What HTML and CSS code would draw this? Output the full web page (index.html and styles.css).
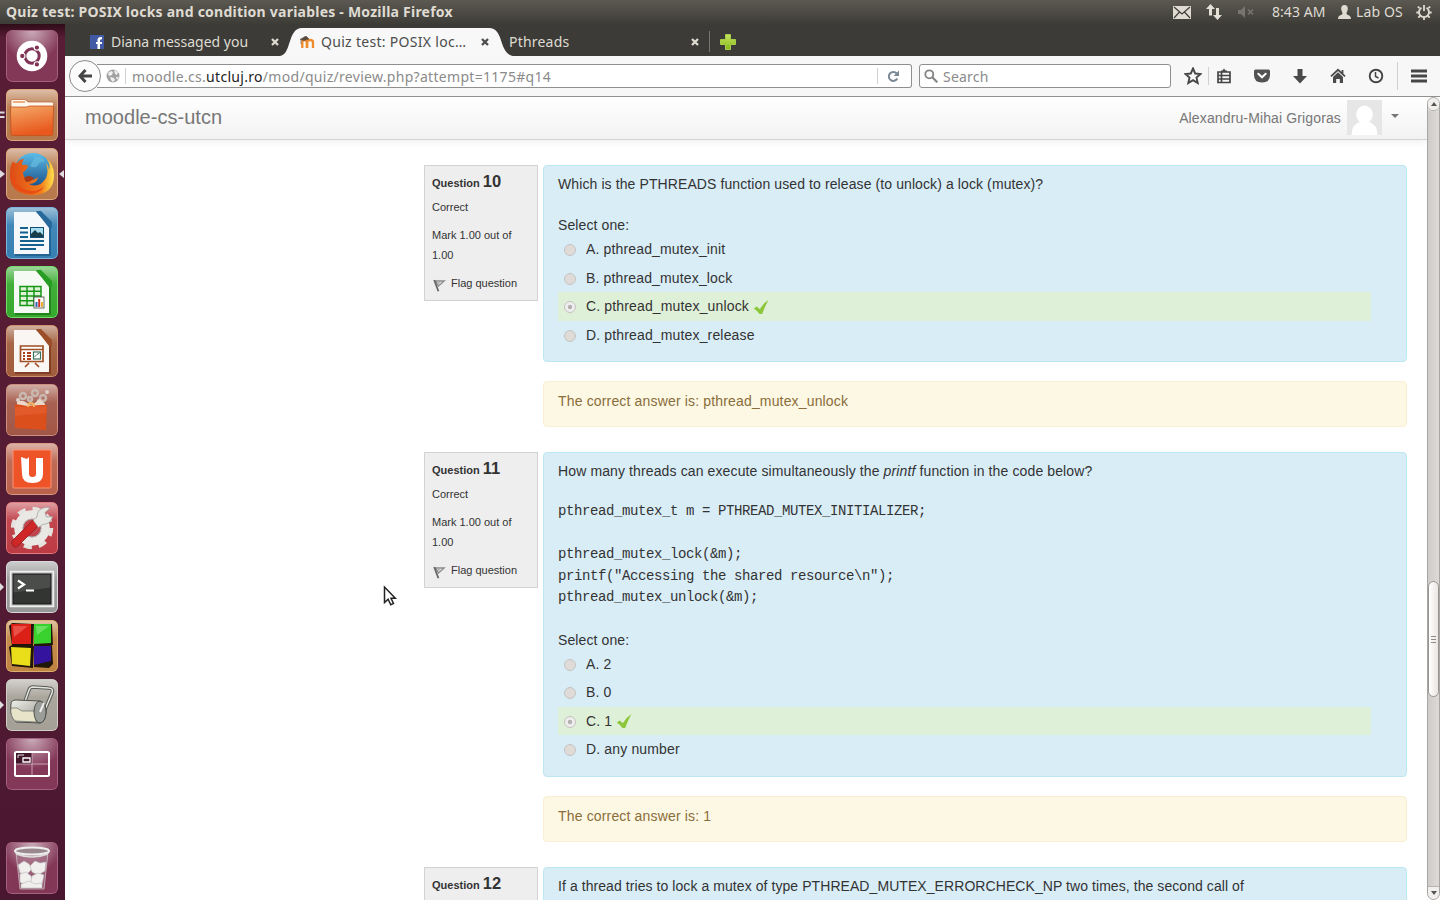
FILE: index.html
```html
<!DOCTYPE html>
<html lang="en">
<head>
<meta charset="utf-8">
<title>Quiz test: POSIX locks and condition variables</title>
<link rel="stylesheet" href="styles.css">
</head>
<body>
<svg class="defs" width="0" height="0" aria-hidden="true">
  <defs>
    <linearGradient id="shine" x1="0" y1="0" x2="0" y2="1"><stop offset="0" stop-color="#fff" stop-opacity=".55"/><stop offset=".35" stop-color="#fff" stop-opacity=".12"/><stop offset="1" stop-color="#fff" stop-opacity=".06"/></linearGradient>
    <radialGradient id="glow" cx=".5" cy="0" r=".6"><stop offset="0" stop-color="#fff" stop-opacity=".6"/><stop offset="1" stop-color="#fff" stop-opacity=".04"/></radialGradient>
    <linearGradient id="folder" x1="0" y1="0" x2=".3" y2="1"><stop offset="0" stop-color="#f3a968"/><stop offset="1" stop-color="#e9581d"/></linearGradient>
    <linearGradient id="globe" x1="0" y1="0" x2="0" y2="1"><stop offset="0" stop-color="#5cbbe8"/><stop offset="1" stop-color="#12447f"/></linearGradient>
    <linearGradient id="fox" x1="0" y1="0" x2="1" y2="0"><stop offset="0" stop-color="#dd4b17"/><stop offset=".7" stop-color="#f27c1a"/><stop offset="1" stop-color="#ffe34d"/></linearGradient>
    <linearGradient id="metal" x1="0" y1="0" x2="1" y2="1"><stop offset="0" stop-color="#f2f2ec"/><stop offset="1" stop-color="#8c8c84"/></linearGradient>
    <linearGradient id="green" x1="0" y1="0" x2="0" y2="1"><stop offset="0" stop-color="#c8e35c"/><stop offset="1" stop-color="#84b81c"/></linearGradient>
    <symbol id="x" viewBox="0 0 10 10"><path d="M2 2l6 6M8 2l-6 6" stroke="currentColor" stroke-width="2.3" fill="none"/></symbol>
    <symbol id="flag" viewBox="0 0 14 14"><path d="M3.500 3h8.700L6.500 8z" fill="#f6f6f6" stroke="#8a8a8a" stroke-width="1.300"/><path d="M2.200 2l4.200 11.200" stroke="#666" stroke-width="1.800"/><path d="M5 4.200h4L6.200 6.600z" fill="#aaa"/></symbol>
    <symbol id="tick" viewBox="0 0 16 16"><path d="M.8 9.400L3.800 7.500l3 2.800Q10 4.500 15.500 1Q12 7 9.200 15H6.500Q4.300 11.600 .8 9.400z" fill="#8cc63a"/></symbol>
  </defs>
</svg>
<div class="desktop">
  <header class="panel">
    <div class="panel-title">Quiz test: POSIX locks and condition variables - Mozilla Firefox</div>
    <div class="indicators">
      <svg class="ind-mail" width="18" height="13" viewBox="0 0 18 13"><rect width="18" height="13" fill="#dfdbd2"/><path d="M1 1l8 7 8-7M1 12l5.500-6M17 12l-5.500-6" fill="none" stroke="#3f3d38" stroke-width="1.200"/></svg>
      <svg class="ind-net" width="18" height="18" viewBox="0 0 18 18"><path d="M5.500 1L10 6H7v6.500H4V6H1zM12.500 17L8 12h3V5h3v7h3z" fill="#e4e0d8"/></svg>
      <svg class="ind-sound" width="18" height="14" viewBox="0 0 18 14"><path d="M1 5h3l4-4v12L4 9H1z" fill="#77746d"/><path d="M11 4.500l5 5M16 4.500l-5 5" stroke="#77746d" stroke-width="1.700"/></svg>
      <span class="clock">8:43 AM</span>
      <svg class="ind-user" width="13" height="14" viewBox="0 0 13 14"><path d="M6.500 0C9 0 10 1.800 9.800 4 9.700 6 8.500 7 8.500 8.500c0 1.700 4.500 1.300 4.500 5.500H0c0-4.200 4.500-3.800 4.500-5.500C4.500 7 3.300 6 3.200 4 3 1.800 4 0 6.500 0z" fill="#dfdbd2"/></svg>
      <span class="user">Lab OS</span>
      <svg class="ind-gear" width="16" height="16" viewBox="0 0 16 16" fill="none" stroke="#dfdbd2"><path d="M5.500 3.800a5 5 0 1 0 5 0" stroke-width="1.800"/><path d="M8 1v6M3.600 4.200L1.800 2.600M12.400 4.200l1.800-1.600M2.800 8.500H.3M13.200 8.500h2.500M4 12l-1.700 1.700M12 12l1.700 1.700M8 13.500V16" stroke-width="1.800"/></svg>
    </div>
  </header>
  <div class="workspace">
    <nav class="launcher">
      <svg class="tile t-dash" viewBox="0 0 52 52"><rect x=".5" y=".5" width="51" height="51" rx="6" fill="url(#glow)" stroke="#a3627d"/><circle cx="26" cy="26" r="15.300" fill="#fff"/><circle cx="26" cy="26" r="7.200" fill="none" stroke="#803455" stroke-width="3"/><g fill="#803455" stroke="#fff" stroke-width="1.100"><circle cx="16.300" cy="26" r="2.700"/><circle cx="30.900" cy="17.600" r="2.700"/><circle cx="30.900" cy="34.400" r="2.700"/></g></svg>
      <div class="slot"><svg class="tile t-files" viewBox="0 0 52 52"><rect x=".5" y=".5" width="51" height="51" rx="5" fill="url(#shine)" stroke="#dcaa82"/><path d="M5 12q0-1.500 1.500-1.500H19l3 2.500h24q1.500 0 1.500 1.500V22H5z" fill="#fff8ef" stroke="#b9622f" stroke-width=".7"/><path d="M7 13h12" stroke="#ea965a" stroke-width="1.500"/><path d="M4.500 18h16l3-1h24l-.7 28q0 1.500-1.500 1.500H6.500Q5 46.500 5 45z" fill="url(#folder)" stroke="#c4501b" stroke-width=".8"/></svg><svg class="mark" width="6" height="8" viewBox="0 0 6 8"><path d="M0 1.500h4.500M0 6h4.500" stroke="#ddd" stroke-width="2"/></svg></div>
      <div class="slot"><svg class="tile t-fox" viewBox="0 0 52 52"><rect x=".5" y=".5" width="51" height="51" rx="5" fill="url(#shine)" stroke="#dcaa82"/><circle cx="27" cy="24" r="19" fill="url(#globe)"/><path d="M29 9q7-1 10 5-5-1-7 3t-8 1z" fill="#65bce0" opacity=".7"/><path d="M7 13q1 3 4 2 3-4 7-4-2 3-2 6 4-1 6 1-1 4-5 6 0 7 7 8 5 0 8-3-1 7-9 7 10 5 17-6 3-7 0-15 3 3 3 7 2-6-3-12 8 6 8 17 0 20-22 20Q3 46 4 26q0-8 3-13z" fill="url(#fox)"/><path d="M8 22q-2 12 8 18 12 7 23-2-10 13-25 5Q4 36 8 22z" fill="#e84d15"/><path d="M18 30q5-4 10 0-3 4-8 4z" fill="#a83a17"/></svg><svg class="mark" width="6" height="8" viewBox="0 0 6 8"><path d="M0 0l5 4-5 4z" fill="#ddd"/></svg><svg class="mark mark-right" width="6" height="8" viewBox="0 0 6 8"><path d="M5 0L0 4l5 4z" fill="#ddd"/></svg></div>
      <svg class="tile t-writer" viewBox="0 0 52 52"><rect x=".5" y=".5" width="51" height="51" rx="5" fill="url(#shine)" stroke="#7fb5da"/><path d="M9 5h23l13 14v30H9z" fill="#17527f" opacity=".6"/><path d="M8 5h22l13 14v28H8z" fill="#f5f8fa"/><path d="M30 4h5l11 11v6h-3z" fill="#27699b"/><path d="M14 21h8M14 25.500h8M14 30h8M14 34h24M14 38h24M14 42h16" stroke="#14618e" stroke-width="1.800"/><rect x="24.500" y="20.500" width="13" height="10" fill="#a9dcef" stroke="#114e75"/><path d="M25 30v-3l4-4 3 3 2-1 3 3v2z" fill="#183e4b"/></svg>
      <svg class="tile t-calc" viewBox="0 0 52 52"><rect x=".5" y=".5" width="51" height="51" rx="5" fill="url(#shine)" stroke="#75dc6e"/><path d="M9 5h23l13 14v30H9z" fill="#176b12" opacity=".6"/><path d="M8 5h22l13 14v28H8z" fill="#f5faf4"/><path d="M30 4h5l11 11v6h-3z" fill="#289d24"/><path d="M14 20.500h21v19H14zM14 25.200h21M14 30h21M14 34.800h21M21 20.500v19M28 20.500v19" fill="#dff3d6" stroke="#179717" stroke-width="1.500"/><rect x="28" y="31" width="10" height="11" fill="#fff" stroke="#333" stroke-width=".7"/><path d="M30.500 41v-5" stroke="#2a62b8" stroke-width="2"/><path d="M33.200 41v-8" stroke="#cb3328" stroke-width="2"/><path d="M36 41v-5" stroke="#e8b22b" stroke-width="2"/></svg>
      <svg class="tile t-impress" viewBox="0 0 52 52"><rect x=".5" y=".5" width="51" height="51" rx="5" fill="url(#shine)" stroke="#cf9170"/><path d="M9 5h23l13 14v30H9z" fill="#6a2c10" opacity=".6"/><path d="M8 5h22l13 14v28H8z" fill="#faf6f3"/><path d="M30 4h5l11 11v6h-3z" fill="#9c4e29"/><path d="M14.500 21h22.500v15.500H14.500zM14.500 24.500H37M23 38l-4 4M29 38l4 4" fill="#fff" stroke="#a04e23" stroke-width="1.700"/><path d="M17 28h2M17 31h2M17 34h2M21 28h4M21 31h4M21 34h4" stroke="#ab3f17" stroke-width="1.800"/><rect x="27.500" y="27" width="7" height="7" fill="#fff" stroke="#39705b" stroke-width="1.200"/><path d="M28.500 32l2.500-2.500 2.500-1.500" stroke="#39705b" fill="none"/></svg>
      <svg class="tile t-software" viewBox="0 0 52 52"><rect x=".5" y=".5" width="51" height="51" rx="5" fill="url(#shine)" stroke="#cb9080"/><g stroke="#c9b8af" stroke-width="2.500" fill="none"><circle cx="17" cy="12" r="3"/><circle cx="29" cy="9" r="3"/><circle cx="37" cy="14" r="3"/><circle cx="24" cy="15" r="2"/></g><g fill="#ddd0c8"><circle cx="12" cy="16" r="2"/><circle cx="41" cy="8" r="2"/><circle cx="33" cy="17" r="2"/></g><path d="M11 18q5-3 10 1t9-1 9 2v4H11z" fill="#ead8ca"/><path d="M9 20l7 1 5 1 13-1 7 0-1 25-31-2z" fill="#da4f1b"/><path d="M9 23l32-1-1 7-31 3z" fill="#e2592a"/><path d="M22 23q0-4 3-4t3 4" fill="none" stroke="#f4b25f" stroke-width="2"/></svg>
      <svg class="tile t-one" viewBox="0 0 52 52"><rect x=".5" y=".5" width="51" height="51" rx="5" fill="url(#shine)" stroke="#d89b86"/><rect x="7" y="7" width="38" height="38" rx="1" fill="#ef5428" stroke="#f89476"/><path d="M15 14l6 2 2-2v17q0 3 3.500 3t3.500-3V15h7v16q0 9-10.500 9T16 31z" fill="#fff"/></svg>
      <svg class="tile t-settings" viewBox="0 0 52 52"><rect x=".5" y=".5" width="51" height="51" rx="5" fill="url(#shine)" stroke="#e07c80"/><circle cx="26" cy="26" r="19" fill="none" stroke="#e4e2de" stroke-width="4.500" stroke-dasharray="8 6.920"/><circle cx="26" cy="26" r="13.500" fill="none" stroke="#e9e8e4" stroke-width="8.500"/><circle cx="26" cy="26" r="9" fill="none" stroke="#aaa" stroke-width="1"/><path d="M6 42q-1-2 1-4l20-20 6 5-20 20q-3 3-5 2z" fill="#cf2727" stroke="#911a1c" stroke-width=".8"/><path d="M27 18l4-3q0-7 6-9 4-1.500 7 0l-5 4.500 1.500 4.500 6-.5q-1 6-7 7.500l-3 .5-4 3z" fill="#e7e7e3" stroke="#999" stroke-width=".7"/></svg>
      <div class="slot"><svg class="tile t-term" viewBox="0 0 52 52"><rect x=".5" y=".5" width="51" height="51" rx="5" fill="url(#shine)" stroke="#dadada"/><rect x="4.500" y="10.500" width="43" height="35" fill="#c5c5c5" stroke="#efefef" stroke-width="1.500"/><rect x="7" y="13" width="38" height="30" fill="#333533" stroke="#151615"/><path d="M7.500 13.500h37v13l-37 5z" fill="#fff" opacity=".12"/><path d="M12 19.500l6 4-6 4M20 29.500h8" fill="none" stroke="#fff" stroke-width="2.200"/></svg><svg class="mark" width="6" height="8" viewBox="0 0 6 8"><path d="M0 0l4 4-4 4z" fill="#ddd"/></svg></div>
      <svg class="tile t-blocks" viewBox="0 0 52 52"><rect x=".5" y=".5" width="51" height="51" rx="5" fill="url(#shine)" stroke="#dcae72"/><g fill="#211709"><path d="M3 6l3-3 21 1v22L6 25zM27 4h19l1 21-19 1zM3 27l3-2 21 1v22L6 46zM27 26l19-1 1 19-4 4-15-1z"/></g><path d="M5 4h20v20H6z" fill="#dd2017"/><path d="M28 4h17v19l-17 1z" fill="#39d12e"/><path d="M5 27l20 1-1 18-18-2z" fill="#e9de19"/><path d="M28 26h17v15l-17 4z" fill="#34139f"/><path d="M7 6h15L8 17z" fill="#f68277" opacity=".5"/><path d="M30 6h13L31 15z" fill="#a0ee91" opacity=".5"/></svg>
      <div class="slot"><svg class="tile t-scan" viewBox="0 0 52 52"><rect x=".5" y=".5" width="51" height="51" rx="5" fill="url(#shine)" stroke="#d0cdc5"/><path d="M17 28l6-17q1-3 4-3l15 1q6 0 4 5l-8 19" fill="none" stroke="#585b56" stroke-width="3.500"/><path d="M17 28l6-17q1-3 4-3l15 1q6 0 4 5l-8 19" fill="none" stroke="#e4e4de" stroke-width="1.500"/><path d="M5 25q0-4 5-4l24 1q7 3 6 12-1 9-6 10l-24-1Q3 36 5 25z" fill="url(#metal)" stroke="#4d504b"/><path d="M5 29h6l5 3h14v11l-21-1q-5-5-4-13z" fill="#e7e4c9" stroke="#777" stroke-width=".8"/><ellipse cx="34" cy="33" rx="6" ry="11" fill="#9b9e98" stroke="#4d504b"/><path d="M34 33l4-9" stroke="#eee" stroke-width="2"/></svg><svg class="mark" width="6" height="8" viewBox="0 0 6 8"><path d="M0 0l4 4-4 4z" fill="#ddd"/></svg></div>
      <svg class="tile t-workspaces" viewBox="0 0 52 52"><rect x=".5" y=".5" width="51" height="51" rx="5" fill="url(#glow)" stroke="#a3627d"/><rect x="9" y="14" width="17" height="12" fill="#41152a"/><rect x="9" y="14" width="34" height="24" rx="1.500" fill="none" stroke="#fff" stroke-width="2"/><path d="M26 15v22M10 26h32" stroke="#dbb9c7" stroke-width=".8"/><path d="M17 20h7v4h-7z" fill="none" stroke="#fff" stroke-width="1.300"/><path d="M12 20v-3h6" fill="none" stroke="#ddd"/></svg>
      <svg class="tile t-trash" viewBox="0 0 52 52"><rect x=".5" y=".5" width="51" height="51" rx="5" fill="url(#glow)" stroke="#a3627d"/><path d="M10 10l4 37h24l4-37z" fill="#a87689" opacity=".65" stroke="#ddd"/><g fill="#f0efee" stroke="#bbb" stroke-width=".6"><path d="M12 23l6-4 5 3 3 5-5 5-7-1z"/><path d="M24 24l5-5 5 2 6-1-1 9-7 4-6-3z"/><path d="M14 32l6-2 5 4 2 6-7 4-6-4z"/><path d="M26 34l6-3 6 2-2 9-7 2-4-4z"/><path d="M15 42l8-3 6 3 7-1v5H15z"/></g><ellipse cx="26" cy="9" rx="17" ry="3.500" fill="#99898f" stroke="#eee" stroke-width="2"/><path d="M10 12q16 6 32 0" fill="none" stroke="#ddd" stroke-width="1.500"/></svg>
    </nav>
    <section class="browser">
      <div class="tabs">
        <div class="tab tab-fb">
          <svg class="fav" width="14" height="14" viewBox="0 0 14 14"><rect width="14" height="14" fill="#4259a6"/><path d="M10 14V9h2V7h-2V5.500q0-1.300 2-1.300V2q-4.500-.5-4.500 3.200V7H6v2h1.500v5z" fill="#fff"/></svg>
          <span class="tab-name n-fb">Diana messaged you</span><svg class="close" width="10" height="10"><use href="#x"/></svg>
        </div>
        <div class="tab tab-active">
          <svg class="tab-shape" width="236" height="28" viewBox="0 0 236 28"><path d="M0 28C13 28 8 0 23 0H210C226 0 219 28 236 28z" fill="#f8f8f8"/></svg>
          <svg class="fav" width="15" height="12" viewBox="0 0 15 12"><path d="M2.300 12V6q0-2 2.200-2T6.800 6v6M7.200 12V6q0-2 2.900-2T13 6v6" fill="none" stroke="#ee8b2c" stroke-width="2.300"/><path d="M0 3.500L6 0l3 3-5 1.500zM1 4v4" fill="#5a4a40" stroke="#5a4a40" stroke-width=".6"/></svg>
          <span class="tab-name n-quiz">Quiz test: POSIX loc…</span><svg class="close" width="10" height="10"><use href="#x"/></svg>
        </div>
        <div class="tab tab-pt"><span class="tab-name n-pt">Pthreads</span><svg class="close" width="10" height="10"><use href="#x"/></svg></div>
        <svg class="newtab" width="16" height="16" viewBox="0 0 16 16"><path d="M5.500.5h5v5h5v5h-5v5h-5v-5h-5v-5h5z" fill="url(#green)" stroke="#a8cc48"/></svg>
      </div>
      <div class="toolbar">
        <div class="back"><svg width="14" height="14" viewBox="0 0 14 14"><path d="M7.500 1L2 7l5.500 6M2 7h12" fill="none" stroke="#454545" stroke-width="3"/></svg></div>
        <div class="urlbar">
          <svg width="14" height="14" viewBox="0 0 14 14"><circle cx="7" cy="7" r="6.500" fill="#a2a2a2"/><path d="M2 4l3-2 2 1-1 3-3 1zM8 1l4 2-1 3-2-1zM4 8l4 1 1 2-2 2-2-2zM10 8h3l-2 3z" fill="#f0f0f0"/></svg>
          <i class="sep"></i>
          <span class="url">moodle.cs.<b>utcluj.ro</b>/mod/quiz/review.php?attempt=1175#q14</span>
          <i class="sep"></i>
          <svg class="reload" width="13" height="13" viewBox="0 0 13 13"><path d="M10.300 8.600A4.500 4.500 0 1 1 9.600 3.300" fill="none" stroke="#7b8996" stroke-width="2"/><path d="M12 0.500V6H6.500z" fill="#7b8996"/></svg>
        </div>
        <div class="search"><svg width="14" height="14" viewBox="0 0 14 14"><circle cx="5.300" cy="5.300" r="4" fill="none" stroke="#858585" stroke-width="1.800"/><path d="M8.300 8.300l5 5" stroke="#858585" stroke-width="2.200"/></svg><span>Search</span></div>
        <div class="tools">
          <svg width="18" height="18" viewBox="0 0 18 18"><path d="M9 1.500l2.200 5 5.300.5-4 3.600 1.200 5.400L9 13.200 4.300 16l1.200-5.400-4-3.600 5.300-.5z" fill="none" stroke="#464646" stroke-width="1.900"/></svg>
          <i class="sep"></i>
          <svg class="near" width="16" height="16" viewBox="0 0 16 16"><path d="M2 4h12v10.500H2zM2 7.500h12M2 11h12M5.500 4v10.500" fill="none" stroke="#464646" stroke-width="1.700"/><path d="M5 4V2.500h1.500L8 .5l1.500 2H11V4z" fill="#464646"/></svg>
          <svg width="16" height="16" viewBox="0 0 16 16"><path d="M1.500 1.500h13q1.500 0 1.500 1.500v4q0 7.500-8 7.500T0 7V3q0-1.500 1.500-1.500z" fill="#525252"/><path d="M4.300 5.800L8 9.300l3.700-3.500" fill="none" stroke="#fff" stroke-width="2" stroke-linecap="round"/></svg>
          <svg width="16" height="16" viewBox="0 0 16 16"><path d="M5.500 1h5v7H15l-7 7.500L1 8h4.500z" fill="#4a4a4a"/></svg>
          <svg width="16" height="16" viewBox="0 0 16 16"><path d="M1 8.300L8 1.800l7 6.500M12.500 2v4" fill="none" stroke="#4a4a4a" stroke-width="1.800"/><path d="M3 9l5-4.700L13 9v6H9.800v-4H6.200v4H3z" fill="#4a4a4a"/></svg>
          <svg width="16" height="16" viewBox="0 0 16 16"><circle cx="8" cy="8" r="6.300" fill="none" stroke="#464646" stroke-width="1.900"/><path d="M7.500 4v4.500l3 1.500" fill="none" stroke="#464646" stroke-width="1.500"/></svg>
          <i class="sep tall"></i>
          <svg class="menu" width="16" height="14" viewBox="0 0 16 14"><path d="M0 2h16M0 7h16M0 12h16" stroke="#464646" stroke-width="3"/></svg>
        </div>
      </div>
      <div class="viewport">
        <main class="page">
          <div class="navbar">
            <span class="brand">moodle-cs-utcn</span>
            <span class="who">Alexandru-Mihai Grigoras</span>
            <svg class="avatar" width="35" height="35" viewBox="0 0 35 35"><rect width="35" height="35" fill="#e6e6e6"/><ellipse cx="17.500" cy="14.500" rx="8.300" ry="9" fill="#fff"/><path d="M4.500 35q0-10 8-13h10q8 3 8 13z" fill="#fff"/></svg>
            <svg class="caret" width="8" height="4" viewBox="0 0 8 4"><path d="M0 0h8L4 4z" fill="#777"/></svg>
          </div>
          <div class="questions">
            <article class="question">
              <aside class="info"><h3>Question <b>10</b></h3><p>Correct</p><p>Mark 1.00 out of 1.00</p><p class="flag"><svg width="14" height="14"><use href="#flag"/></svg>Flag question</p></aside>
              <div class="content">
                <div class="formulation f10">
                  <p class="qtext">Which is the PTHREADS function used to release (to unlock) a lock (mutex)?</p>
                  <p class="prompt">Select one:</p>
                  <div class="answers">
                    <div class="row"><i class="radio"></i>A. pthread_mutex_init</div>
                    <div class="row"><i class="radio"></i>B. pthread_mutex_lock</div>
                    <div class="row correct"><i class="radio on"></i>C. pthread_mutex_unlock<svg width="16" height="16"><use href="#tick"/></svg></div>
                    <div class="row"><i class="radio"></i>D. pthread_mutex_release</div>
                  </div>
                </div>
                <div class="feedback">The correct answer is: pthread_mutex_unlock</div>
              </div>
            </article>
            <article class="question">
              <aside class="info"><h3>Question <b>11</b></h3><p>Correct</p><p>Mark 1.00 out of 1.00</p><p class="flag"><svg width="14" height="14"><use href="#flag"/></svg>Flag question</p></aside>
              <div class="content">
                <div class="formulation f11">
                  <p class="qtext">How many threads can execute simultaneously the <em>printf</em> function in the code below?</p>
                  <pre class="code">pthread_mutex_t m = PTHREAD_MUTEX_INITIALIZER;

pthread_mutex_lock(&amp;m);
printf("Accessing the shared resource\n");
pthread_mutex_unlock(&amp;m);</pre>
                  <p class="prompt">Select one:</p>
                  <div class="answers">
                    <div class="row"><i class="radio"></i>A. 2</div>
                    <div class="row"><i class="radio"></i>B. 0</div>
                    <div class="row correct"><i class="radio on"></i>C. 1<svg width="16" height="16"><use href="#tick"/></svg></div>
                    <div class="row"><i class="radio"></i>D. any number</div>
                  </div>
                </div>
                <div class="feedback">The correct answer is: 1</div>
              </div>
            </article>
            <article class="question">
              <aside class="info"><h3>Question <b>12</b></h3></aside>
              <div class="content"><div class="formulation f12"><p class="qtext">If a thread tries to lock a mutex of type PTHREAD_MUTEX_ERRORCHECK_NP two times, the second call of</p></div></div>
            </article>
          </div>
        </main>
        <div class="scrollbar">
          <div class="sb-btn"><svg width="6" height="4" viewBox="0 0 6 4"><path d="M0 4h6L3 0z" fill="#555"/></svg></div>
          <div class="sb-track"><div class="thumb"><i></i><i></i><i></i></div></div>
          <div class="sb-btn sb-down"><svg width="6" height="4" viewBox="0 0 6 4"><path d="M0 0h6L3 4z" fill="#555"/></svg></div>
        </div>
      </div>
    </section>
  </div>
  <svg class="cursor" width="15" height="22" viewBox="0 0 15 22"><path d="M1.500 2v15.500l3.600-3.300 2.700 5.600 2.700-1.300-2.500-5.300h4.300z" fill="#fff" stroke="#222" stroke-width="1.500"/></svg>
</div>
</body>
</html>
```
FILE: styles.css
```css
* { box-sizing: border-box; }
body { margin: 0; font-family: "Liberation Sans", Arial, sans-serif; font-size: 14px; color: #333; }
h3, p, pre { margin: 0; }
svg { display: block; flex: none; }
.defs { position: absolute; }
.desktop { position: relative; width: 1440px; height: 900px; overflow: hidden; display: flex; flex-direction: column; background: #fff; }

.panel { height: 24px; flex: none; display: flex; align-items: center; padding: 0 8px 0 6px; background: linear-gradient(#5b5951, #3e3c37); color: #dfdbd2; font-family: "Noto Sans", "Open Sans", sans-serif; white-space: nowrap; }
.panel-title { font-size: 14px; font-weight: bold; letter-spacing: 0.23px; line-height: 24px; }
.indicators { margin-left: auto; display: flex; align-items: center; font-size: 14px; line-height: 24px; }
.ind-net { margin-left: 14px; }
.ind-sound { margin-left: 14px; }
.clock { margin-left: 17px; width: 54px; letter-spacing: 0.05px; }
.ind-user { margin-left: 12px; }
.user { margin-left: 5px; width: 48px; letter-spacing: 0.15px; }
.ind-gear { margin-left: 12px; }

.workspace { flex: 1; min-height: 0; display: flex; }
.launcher { width: 65px; flex: none; padding: 6px 0 6px 6px; display: flex; flex-direction: column; gap: 7px; background: linear-gradient(#2f0c18, #581d35 14px, #541c34 60%, #4a1730); }
.slot { position: relative; width: 52px; height: 52px; flex: none; }
.tile { width: 52px; height: 52px; border-radius: 6px; }
.mark { position: absolute; left: -6px; top: 22px; }
.mark-right { left: 53px; }
.t-dash, .t-workspaces, .t-trash { background: #7e3051; }
.t-trash { margin-top: auto; }
.t-files, .t-fox { background: #b3703f; }
.t-writer { background: #2877ad; }
.t-calc { background: #28a31f; }
.t-impress { background: #9a512e; }
.t-software { background: #9c4c3a; }
.t-one { background: #b55740; }
.t-settings { background: #b92e37; }
.t-term { background: #909090; }
.t-blocks { background: #bc7c35; }
.t-scan { background: #9f9a90; }

.browser { flex: 1; min-width: 0; display: flex; flex-direction: column; }
.tabs { height: 32px; flex: none; display: flex; background: #3c3b37; font-family: "Noto Sans", "Open Sans", sans-serif; font-size: 14px; color: #dfdbd2; }
.tab { position: relative; height: 32px; display: flex; align-items: center; padding-top: 4px; white-space: nowrap; line-height: 20px; }
.tab-fb { width: 214px; padding-left: 25px; }
.tab-active { width: 230px; padding-left: 21px; color: #4c4c4c; }
.tab-pt { width: 201px; }
.tab-pt::after { content: ""; position: absolute; right: 0; top: 7px; width: 1px; height: 21px; background: #77756f; }
.tab-shape { position: absolute; left: 0; top: 4px; }
.tab .fav, .tab-name, .close { position: relative; }
.tab-name { margin-left: 7px; }
.n-quiz { margin-left: 6px; letter-spacing: 0.3px; }
.n-pt { margin-left: 0; letter-spacing: 0.2px; }
.tab .close { position: absolute; }
.tab-fb .close { left: 205px; }
.tab-active .close { left: 201px; }
.tab-pt .close { left: 181px; }
.newtab { margin: 10px 0 0 10px; }

.toolbar { height: 41px; flex: none; display: flex; align-items: center; padding: 0 13px 0 4px; background: #f7f7f7; border-bottom: 1px solid #919191; font-family: "Noto Sans", "Open Sans", sans-serif; }
.back { width: 32px; height: 32px; border: 1px solid #8b8b8b; border-radius: 50%; background: #fcfcfc; display: flex; align-items: center; justify-content: center; z-index: 1; }
.urlbar { width: 815px; height: 24px; margin-left: -4px; border: 1px solid #8f8f8f; border-left: 0; border-radius: 0 3px 3px 0; background: #fff; display: flex; align-items: center; padding: 0 11px 0 9px; }
.sep { width: 1px; height: 18px; flex: none; background: #d0d0d0; }
.urlbar .sep { margin-left: 5px; height: 16px; }
.url { flex: 1; margin-left: 6px; padding-top: 1px; font-size: 14px; letter-spacing: 0.3px; line-height: 20px; color: #8b8b8b; white-space: nowrap; }
.url b { font-weight: normal; color: #222; }
.reload { margin-left: 9px; }
.search { width: 252px; height: 24px; margin-left: 7px; border: 1px solid #8f8f8f; border-radius: 3px; background: #fff; display: flex; align-items: center; padding-left: 4px; gap: 5px; font-size: 14px; letter-spacing: 0.2px; line-height: 20px; color: #8b8b8b; }
.search span { padding-top: 1px; }
.tools { margin-left: auto; width: 243px; display: flex; align-items: center; }
.tools svg + svg { margin-left: 22px; }
.tools .sep { margin-left: 6px; }
.tools .near { margin-left: 7px; }
.tools .tall { height: 28px; margin-left: 13px; }
.tools .menu { margin-left: 13px; }

.viewport { flex: 1; min-height: 0; display: flex; }
.page { flex: 1; min-width: 0; overflow: hidden; background: #fff; }
.navbar { height: 43px; display: flex; align-items: center; padding: 0 28px 2px 20px; background: linear-gradient(#fff, #f2f2f2); border-bottom: 1px solid #d4d4d4; box-shadow: 0 1px 8px rgba(0, 0, 0, .08); color: #777; }
.brand { font-size: 20px; letter-spacing: 0.03px; }
.who { margin-left: auto; padding-top: 2px; letter-spacing: 0.13px; }
.avatar { margin-left: 6px; }
.caret { margin: -2px 0 0 9px; }
.questions { padding: 25px 20px 0 359px; display: flex; flex-direction: column; gap: 25px; }
.question { display: flex; align-items: flex-start; gap: 5px; }
.info { width: 114px; height: 136px; flex: none; padding: 5px 7px; background: #eee; border: 1px solid #d3d3d3; font-size: 11px; line-height: 20px; }
.info h3 { font-size: 11px; line-height: 21px; white-space: nowrap; }
.info h3 b { font-size: 16.5px; }
.info p { margin-top: 8px; }
.info h3 + p { margin-top: 3px; }
.flag { display: flex; align-items: center; gap: 5px; white-space: nowrap; }
.flag svg { margin-top: 3px; }
.content { flex: 1; min-width: 0; }
.formulation { padding: 8px 14px; background: #d9edf7; border: 1px solid #bce8f1; border-radius: 4px; line-height: 20px; }
.f10 { height: 197px; }
.f11 { height: 325px; }
.f12 { height: 160px; }
.qtext { letter-spacing: 0.1px; }
.f11 .qtext { letter-spacing: 0.12px; }
.f12 .qtext { letter-spacing: 0.07px; }
.f10 .prompt, .f11 .prompt { margin-top: 21px; letter-spacing: 0.1px; }
.code { margin-top: 20px; font-family: "Liberation Mono", monospace; font-size: 14px; letter-spacing: -0.4px; line-height: 21.5px; }
.answers { width: 813px; }
.row { height: 28.5px; display: flex; align-items: center; white-space: nowrap; letter-spacing: 0.15px; }
.row.correct { background: #dff0d8; }
.row svg { margin: 1px 0 0 4px; }
.radio { width: 12px; height: 12px; flex: none; margin: 2px 10px 0 6px; border: 1px solid #c6c3c1; border-radius: 50%; background: #dedbd9; }
.radio.on { background: radial-gradient(#b4b0b0 0 1.800px, #eee 2.600px); }
.feedback { height: 46px; margin-top: 19px; padding: 9px 14px; background: #fcf8e3; border: 1px solid #fbeed5; border-radius: 4px; color: #8a6d3b; line-height: 20px; letter-spacing: 0.16px; }

.scrollbar { width: 13px; flex: none; display: flex; flex-direction: column; background: #dcd8d6; border: 1px solid #a9a5a2; border-radius: 7px; overflow: hidden; }
.sb-btn { height: 13px; flex: none; display: flex; align-items: center; justify-content: center; background: #f1efee; border-bottom: 1px solid #b8b4b1; border-radius: 0 0 5px 5px; }
.sb-down { border-bottom: 0; border-top: 1px solid #b8b4b1; }
.sb-track { flex: 1; padding-top: 470px; background: linear-gradient(90deg, #cfcbc9, #dedad8); }
.thumb { height: 116px; border: 1px solid #999592; border-radius: 6px; background: linear-gradient(90deg, #fff, #e9e6e4); display: flex; flex-direction: column; align-items: center; justify-content: center; gap: 2px; }
.thumb i { width: 5px; height: 1px; background: #8d8987; }

.cursor { position: absolute; left: 383px; top: 585px; }
```
